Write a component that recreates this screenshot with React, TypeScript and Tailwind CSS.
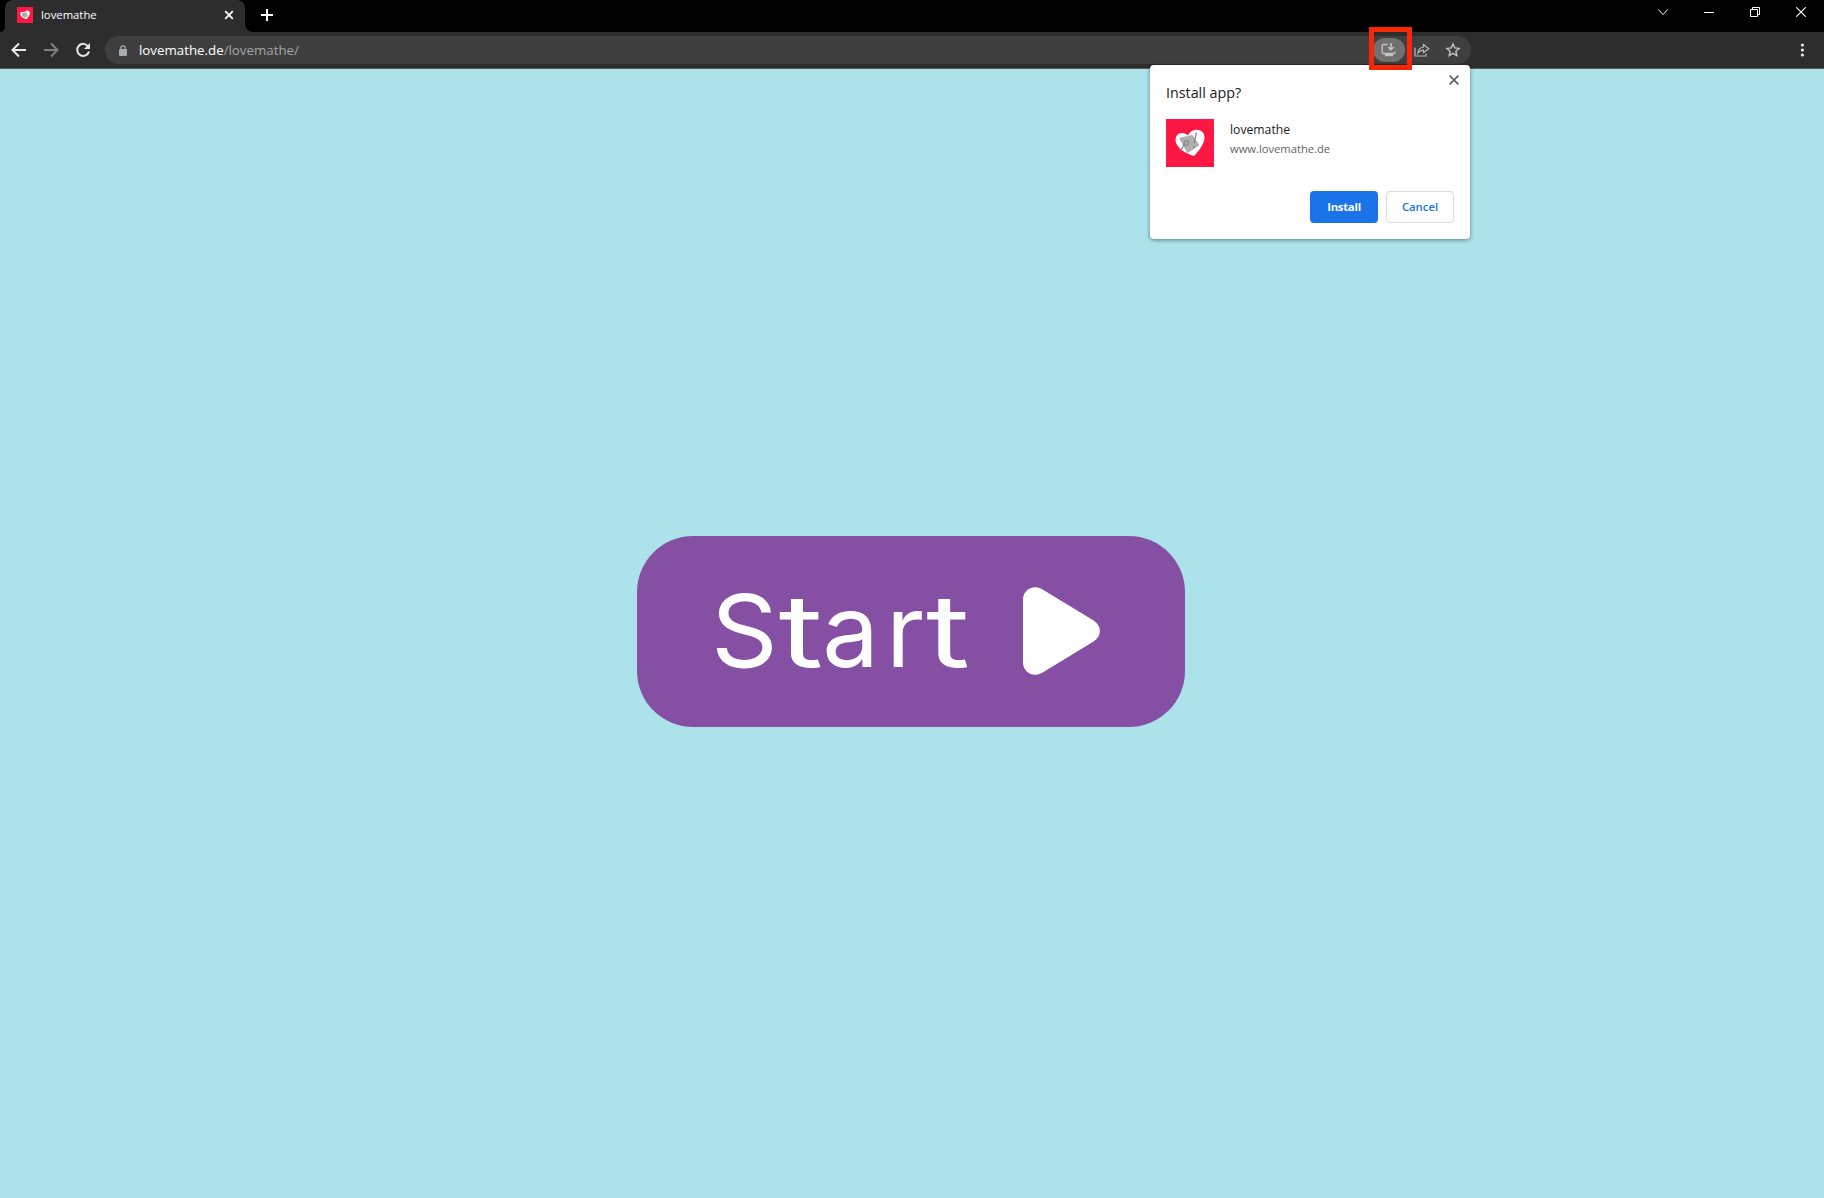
import React from 'react';

function HeartLogo({ className }: { className: string }) {
  return (
    <svg viewBox="0 0 48 48" className={className} aria-hidden="true">
      <rect width="48" height="48" fill="#ff1744" />
      <path
        d="M28 37C20 34.500 11 29.500 9.700 22.500C8.400 15 16 11.300 22 16.500C24.500 11 32 8.800 36.500 13C42.500 20 33.500 31.500 28 37Z"
        fill="#fff"
      />
      <path d="M14.200 19.500L26 16.800L32.500 26L21.500 33.200Z" fill="#b0b0b0" stroke="#b0b0b0" strokeWidth="1.500" strokeLinejoin="round" />
      <path d="M18.500 22.500Q23.500 20.500 22.500 24Q21.500 27.500 17.500 26M19.500 22L15.200 31.500M30.300 14L28.300 23.500M28.300 27L27.600 28.500" fill="none" stroke="#888" strokeWidth="1.300" strokeLinecap="round" />
    </svg>
  );
}

function TitleBar() {
  return (
    <header className="flex h-8 bg-black text-white">
      <div className="flex h-full w-[5px] items-end overflow-hidden bg-[#2d2d2d]">
        <div className="h-full w-full rounded-br-[6px] bg-black" />
      </div>
      <div className="flex h-full w-60 items-center bg-black">
        <div className="flex h-full w-full items-center rounded-t-lg bg-[#2d2d2d] pl-3 pr-[11px]">
          <HeartLogo className="-mt-[2px] h-4 w-4 shrink-0" />
          <span className="ml-2 flex-1 -translate-y-px text-[11.3px] leading-4">lovemathe</span>
          <svg viewBox="0 0 10 10" className="-mt-[2px] h-2.5 w-2.5" stroke="#fff" strokeWidth="1.700">
            <path d="M1.200 1.200l7.600 7.600M8.800 1.200L1.200 8.800" />
          </svg>
        </div>
      </div>
      <div className="h-full bg-[#2d2d2d]">
        <div className="h-full w-[16px] rounded-bl-lg bg-black" />
      </div>
      <svg viewBox="0 0 12 12" className="mt-[9px] h-3 w-3 shrink-0" stroke="#fff" strokeWidth="2">
        <path d="M0 6h12M6 0v12" />
      </svg>
      <div className="ml-auto flex items-start pt-[7px]">
        <svg viewBox="0 0 10 10" className="mr-9 h-2.5 w-2.5" fill="none" stroke="#fff">
          <path d="M.300 2.500L5 7.500L9.700 2.500" />
        </svg>
        <svg viewBox="0 0 10 10" className="mr-9 h-2.5 w-2.5" stroke="#fff">
          <path d="M0 5.500h10" />
        </svg>
        <svg viewBox="0 0 10 10" className="mr-9 h-2.5 w-2.5" fill="none" stroke="#fff">
          <path d="M.500 2.500h7v7h-7zM2.500 2.500v-2h7v7h-2" />
        </svg>
        <svg viewBox="0 0 10 10" className="mr-[18px] h-2.5 w-2.5" fill="none" stroke="#fff" strokeWidth="1.200">
          <path d="M.300 .300l9.400 9.400M9.700 .300L.300 9.700" />
        </svg>
      </div>
    </header>
  );
}

function Toolbar() {
  return (
    <nav className="flex h-[37px] items-start border-b border-[#5a5c5d] bg-[#2d2d2d] pt-1">
      <div className="flex h-7 w-[105px] items-center pl-[11px]">
        <svg viewBox="0 0 16 16" className="h-4 w-4" fill="none" stroke="#e8e8e8" strokeWidth="2">
          <path d="M15 8H2.500M8 1.500L1.500 8L8 14.500" />
        </svg>
        <svg viewBox="0 0 16 16" className="ml-4 h-4 w-4" fill="none" stroke="#808080" strokeWidth="2">
          <path d="M1 8h12.500M8 1.500L14.500 8L8 14.500" />
        </svg>
        <svg viewBox="0 0 16 16" className="ml-4 h-4 w-4" fill="none" stroke="#e8e8e8" strokeWidth="2">
          <path d="M13.200 4.500A6 6 0 1 0 14 9.500" />
          <path d="M15 1v6H9z" fill="#e8e8e8" stroke="none" />
        </svg>
      </div>
      <div className="flex h-7 w-[1366px] items-center rounded-full bg-[#3f3f3f] pl-[14px]">
        <svg viewBox="0 0 8 11" className="h-[11px] w-2" fill="none">
          <path d="M1.800 5V3a2.200 2.200 0 0 1 4.400 0v2" stroke="#a8abaf" strokeWidth="1.200" />
          <rect y="4" width="8" height="7" rx="1" fill="#a8abaf" />
        </svg>
        <div className="ml-3 flex-1 text-[13.3px] leading-5 text-[#a3a5a8]">
          <span className="text-white">lovemathe.de</span>/lovemathe/
        </div>
        <div className="relative flex h-6 w-8 items-center justify-center rounded-full bg-[#707070]">
          <svg viewBox="0 0 16 14" className="h-[14px] w-4" fill="none" stroke="#c4c4c4" strokeWidth="1.300">
            <path d="M6.500 1.500H2.200Q1.200 1.500 1.200 2.500V9.500Q1.200 10.500 2.200 10.500H13Q14 10.500 14 9.500V8.500" />
            <path d="M10 0v6M7.300 4l2.700 2.700L12.700 4" strokeWidth="1.500" />
            <path d="M4 10.500h8v2.700H4z" fill="#c4c4c4" stroke="none" />
          </svg>
          <div className="absolute -left-1 -top-[11px] z-30 h-[43px] w-[43px] border-[5px] border-[#f82807]" />
        </div>
        <svg viewBox="0 0 16 14" className="ml-[9px] h-[14px] w-4" fill="none" stroke="#b8b8b8" strokeWidth="1.200">
          <path d="M1 4.500V13h11v-2.500" />
          <path d="M3.800 10.200C4.200 6.300 6.500 4.300 9.500 4V1.500L14.800 5.700L9.500 9.500V7.200C7 7.200 5.300 8.200 3.800 10.200Z" />
        </svg>
        <svg viewBox="0 0 16 16" className="ml-[15px] mr-[10px] h-4 w-4" fill="none" stroke="#c4c4c4" strokeWidth="1.400">
          <path d="M8 2L9.800 5.900L14.100 6.400L10.900 9.300L11.800 13.600L8 11.400L4.200 13.600L5.100 9.300L1.900 6.400L6.200 5.900Z" />
        </svg>
      </div>
      <svg viewBox="0 0 4 14" className="ml-auto mr-[20px] mt-[7px] h-[14px] w-1" fill="#e8e8e8">
        <circle cx="2.400" cy="2" r="1.600" />
        <circle cx="2.400" cy="7" r="1.600" />
        <circle cx="2.400" cy="12" r="1.600" />
      </svg>
    </nav>
  );
}

function InstallDialog() {
  return (
    <section className="absolute left-[1150px] top-[65px] z-20 flex h-[174px] w-80 flex-col rounded bg-white px-4 pb-4 pt-[18px] shadow-[0_1px_4px_rgba(0,0,0,0.45)]">
      <svg viewBox="0 0 10 10" className="absolute right-[11px] top-[10px] h-2.5 w-2.5" stroke="#5f6368" strokeWidth="1.800">
        <path d="M.600 .600l8.800 8.800M9.400 .600L.600 9.400" />
      </svg>
      <h1 className="text-[14.3px] leading-5 text-[#202124]">Install app?</h1>
      <div className="mt-4 flex">
        <HeartLogo className="h-12 w-12" />
        <div className="ml-4 pt-px">
          <p className="text-[12.2px] leading-5 text-[#202124]">lovemathe</p>
          <p className="-mt-px text-[11.2px] leading-5 text-[#5f6368]">www.lovemathe.de</p>
        </div>
      </div>
      <div className="mt-auto flex justify-end gap-2">
        <button className="h-8 w-[68px] rounded bg-[#1a73e8] text-[11.3px] font-bold tracking-[-0.25px] text-white">Install</button>
        <button className="h-8 w-[68px] rounded border border-[#dadce0] text-[11.3px] font-semibold text-[#1a73e8]">Cancel</button>
      </div>
    </section>
  );
}

export default function App() {
  return (
    <div className="relative flex h-[1198px] w-[1824px] flex-col overflow-hidden bg-[#ace3eb] font-['Open_Sans',sans-serif]">
      <TitleBar />
      <Toolbar />
      <InstallDialog />
      <main className="flex flex-1 items-start pl-[637px] pt-[467px]">
        <button className="flex h-[191px] w-[548px] items-center rounded-[56px] bg-[#854fa3] pb-[2px] pl-[74px] text-white">
          <span className="flex w-[312px] font-['Inter',sans-serif] text-[101px] font-normal leading-none">
            <span className="w-[56px] origin-left scale-x-[1.03]">S</span>
            <span className="w-[50px] origin-left scale-x-[1.35]">t</span>
            <span className="w-[67px]">a</span>
            <span className="w-[42px]">r</span>
            <span className="origin-left scale-x-[1.33]">t</span>
          </span>
          <svg viewBox="0 0 78 88" className="h-[88px] w-[77px]" preserveAspectRatio="none" fill="#fff">
            <path d="M0 12.500C0 3 10 -3 19 2L71.500 33.500C80 39 80 49 71.500 54.500L19 86C10 91 0 85 0 75.500Z" />
          </svg>
        </button>
      </main>
    </div>
  );
}
